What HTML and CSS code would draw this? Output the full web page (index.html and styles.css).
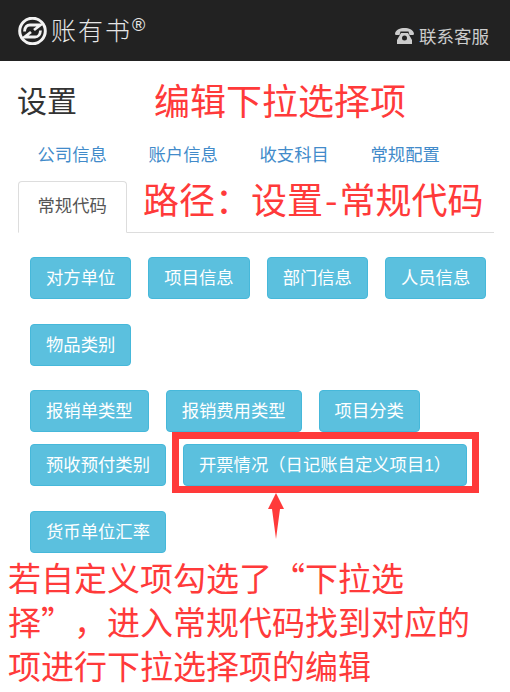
FILE: index.html
```
<!DOCTYPE html>
<html lang="zh-CN">
<head>
<meta charset="utf-8">
<title>设置</title>
<link rel="stylesheet" href="styles.css">
</head>
<body>
<header class="topbar">
  <div class="logo">
    <svg class="logo-icon" width="29" height="28" viewBox="0 0 29 28" fill="none" stroke="#f2f2f2" stroke-width="2.800"><circle cx="14.500" cy="14" r="12.800" stroke-width="3"/><path d="M6.500 14.500Q7 8 12 8H22.500L16 13"/><path d="M22.500 13.500Q22 20 17 20H6.500L13 15"/></svg>
    <span class="logo-name">账有书</span><sup class="logo-mark">®</sup>
  </div>
  <a class="service">
    <svg class="phone" width="19" height="16" viewBox="0 0 19 16" fill="#ccc"><path d="M0 5.500C1 1.500 5 0 9.500 0S18 1.500 19 5.500L18.500 7H14.500L13.500 3.500H5.500L4.500 7H.5Z"/><path d="M6 5H13L17 12V16H2V12ZM9.500 7.500A2.500 2.500 0 1 0 9.500 12.500A2.500 2.500 0 1 0 9.500 7.500Z" fill-rule="evenodd"/></svg>
    <span>联系客服</span>
  </a>
</header>
<main class="page">
  <h1 class="title">设置</h1>
  <nav class="tabs">
    <a class="tab">公司信息</a>
    <a class="tab">账户信息</a>
    <a class="tab">收支科目</a>
    <a class="tab">常规配置</a>
    <a class="tab active">常规代码</a>
  </nav>
  <section class="codes">
    <div class="row"><a class="btn">对方单位</a><a class="btn">项目信息</a><a class="btn">部门信息</a><a class="btn">人员信息</a></div>
    <div class="row snug"><a class="btn">物品类别</a></div>
    <div class="row tight"><a class="btn">报销单类型</a><a class="btn">报销费用类型</a><a class="btn">项目分类</a></div>
    <div class="row"><a class="btn">预收预付类别</a>
      <span class="highlighted"><a class="btn">开票情况（日记账自定义项目1）</a></span>
    </div>
    <div class="row"><a class="btn">货币单位汇率</a></div>
  </section>
</main>
<div class="note note-edit">编辑下拉选择项</div>
<div class="note note-path">路径：设置<span class="dash">-</span>常规代码</div>
<svg class="arrow" width="16" height="46" viewBox="0 0 16 46" fill="#ff3a3a"><path d="M8 0L16 16H12L8 46L4 16H0Z"/></svg>
<div class="note note-body">若自定义项勾选了“下拉选<br>择”，进入常规代码找到对应的<br>项进行下拉选择项的编辑</div>
</body>
</html>
```
FILE: styles.css
```
* { box-sizing: border-box; }
html, body { margin: 0; height: 692px; overflow: hidden; }
body {
  position: relative;
  background: #fff;
  color: #333;
  font-family: "Liberation Sans", "Noto Sans CJK SC", sans-serif;
}
.topbar {
  height: 61px;
  background: #222;
  display: flex;
  align-items: center;
  justify-content: space-between;
  padding: 0 21px 0 18px;
}
.logo { display: flex; align-items: center; color: #e6e6e6; }
.logo-icon { display: block; margin-right: 4px; }
.logo-name { font-size: 25px; line-height: 30px; font-weight: 300; letter-spacing: 2px; }
.logo-mark { font-size: 18px; line-height: 18px; align-self: flex-start; }
.service { display: flex; align-items: center; gap: 5px; color: #ccc; font-size: 17.500px; margin-top: 10px; }
.phone { display: block; }
.page { padding: 0 16px 0 18px; }
.title { margin: 21px 0 0 -1px; font-size: 30px; line-height: 40px; font-weight: 400; color: #333; }
.tabs {
  display: flex;
  flex-wrap: wrap;
  margin-top: 11px;
  border-bottom: 1px solid #ddd;
  width: 476px;
}
.tab {
  display: block;
  width: 109px;
  margin-right: 2px;
  padding: 10px 19.500px;
  font-size: 17.330px;
  line-height: 24px;
  height: 48px;
  color: #428bca;
  white-space: nowrap;
  text-align: left;
}
.tab.active {
  height: 52px;
  padding-top: 12px;
  color: #555;
  border: 1px solid #ddd;
  border-bottom-color: #fff;
  border-radius: 4px 4px 0 0;
  margin-bottom: -1px;
  padding-left: 18.500px;
}
.codes { padding: 24px 0 0 12px; }
.row { display: flex; gap: 17px; margin-bottom: 25px; }
.row.snug { margin-bottom: 24px; }
.row.tight { margin-bottom: 12px; }
.btn {
  display: block;
  height: 42px;
  padding: 0 15px;
  background: #5bc0de;
  border: 1px solid #46b8da;
  border-radius: 4px;
  color: #fff;
  font-size: 17.330px;
  line-height: 40px;
  white-space: nowrap;
}
.highlighted { display: block; position: relative; }
.highlighted::before {
  content: "";
  position: absolute;
  inset: -12px -12px -7px -11px;
  border: 7px solid #ff3a3a;
}
.note { position: absolute; color: #ff3a3a; font-family: "Noto Sans CJK SC", "Liberation Sans", sans-serif; font-size: 36px; line-height: 44px; white-space: nowrap; }
.note-edit { left: 154px; top: 77px; }
.note-path { left: 143px; top: 176px; }
.dash { margin: 0 2px; }
.note-body { left: 8px; top: 555px; font-size: 33px; text-spacing-trim: space-all; }
.arrow { position: absolute; left: 268px; top: 493px; }
```
